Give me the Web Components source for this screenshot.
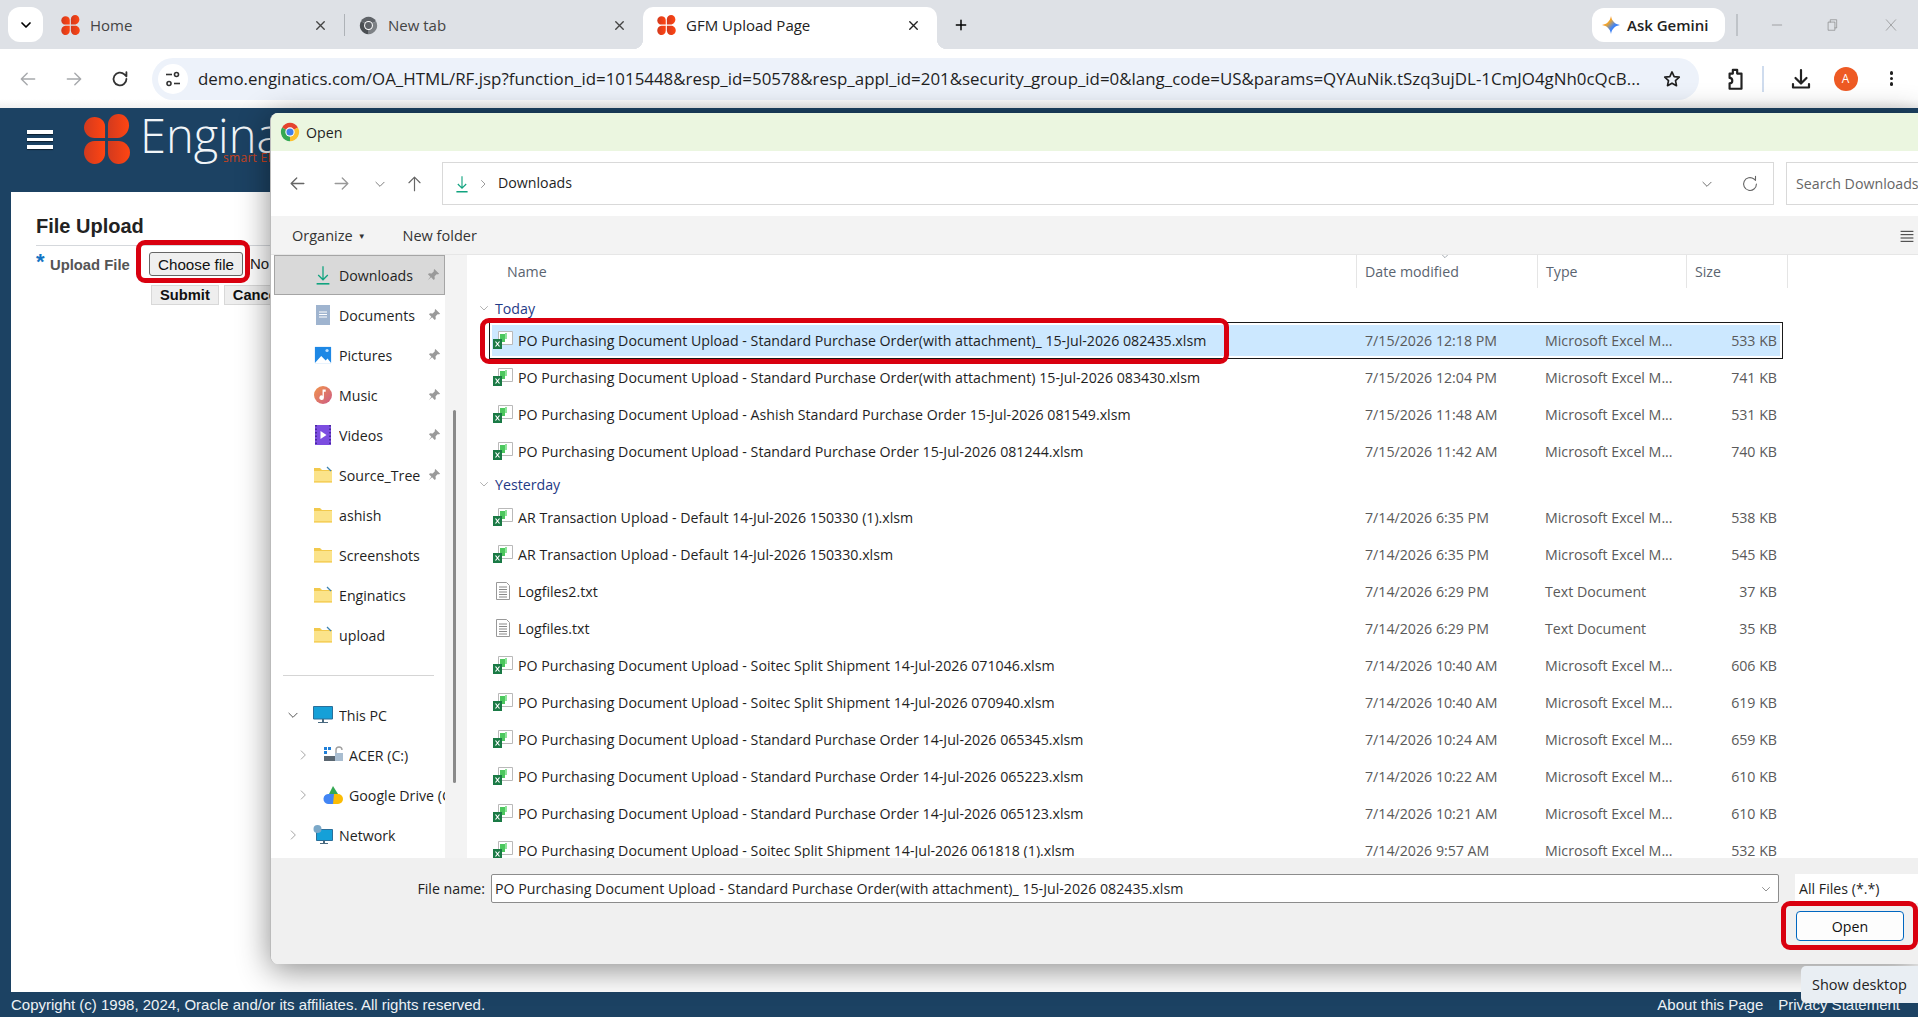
<!DOCTYPE html>
<html><head><meta charset="utf-8"><title>GFM Upload Page</title>
<style>
html,body{margin:0;padding:0;height:100%;overflow:hidden;background:#1c4263}
body{font-family:"Open Sans","Noto Sans",sans-serif}
</style></head>
<body>
<app-shell>
  <browser-tabs></browser-tabs>
  <browser-toolbar></browser-toolbar>
  <erp-page></erp-page>
  <file-dialog></file-dialog>
  <red-mark style="left:136px;top:240px;width:114px;height:43px"></red-mark>
  <red-mark style="left:480px;top:318px;width:749px;height:46px"></red-mark>
  <red-mark style="left:1781px;top:901px;width:137px;height:49px"></red-mark>
  <desk-tip>Show desktop</desk-tip>
</app-shell>
<script>
const petals=(id)=>`<svg viewBox="0 0 48 52" width="100%" height="100%"><defs><linearGradient id="${id}" x1="0" x2="1" y1="0" y2="0"><stop offset="0" stop-color="#d23a1e"/><stop offset="1" stop-color="#ff4512"/></linearGradient></defs><g fill="url(#${id})"><path d="M22 25H11C5 25 0 20 0 14S5 3 11 3c6 0 11 4 11 10z"/><path d="M25 25V11C25 5 30 0 36 0s11 5 11 12-6 13-12 13z"/><path d="M22 28v13c0 6-5 11-11 11S0 46 0 40s4-12 11-12z"/><path d="M25 28h11c6 0 12 5 12 12s-6 12-12 12-11-5-11-12z"/></g></svg>`;
const chromeIcon=(a,b,c,d,e)=>`<svg viewBox="0 0 24 24" width="100%" height="100%"><path fill="${a}" d="M12 12L2.5 6.5A11 11 0 0 1 21.5 6.5z"/><path fill="${b}" d="M12 12L21.5 6.5A11 11 0 0 1 12 23z"/><path fill="${c}" d="M12 12L12 23A11 11 0 0 1 2.5 6.5z"/><circle cx="12" cy="12" r="5.6" fill="${e}"/><circle cx="12" cy="12" r="4.3" fill="${d}"/></svg>`;
const st=(d,w=1.5,c='currentColor')=>`<svg viewBox="0 0 24 24" width="100%" height="100%" fill="none" stroke="${c}" stroke-width="${w}" stroke-linecap="round" stroke-linejoin="round"><path d="${d}"/></svg>`;
const folder=(arrow)=>`<svg viewBox="0 0 20 18" width="100%" height="100%"><path fill="#f2c94c" d="M1 2h6l2 2h10v1H1z"/><path fill="#fbe38a" d="M1 5h18v11.5H1z"/><path fill="#f5cf5b" d="M1 15h18v1.5H1z"/>${arrow?'<path d="M14 1l4 4" stroke="#3b82b0" stroke-width="1.2"/>':''}</svg>`;
const ICONS={
 petal:()=>petals('p'+Math.random().toString(36).slice(2)),
 chrome:()=>chromeIcon('#e5432f','#fbc02d','#34a853','#3f7fe8','#fff'),
 chromegrey:()=>chromeIcon('#5f6368','#7d8185','#4b4f53','#5f6368','#fff'),
 close:()=>st('M6 6l12 12M18 6L6 18',2.2),
 closethin:()=>st('M4 3l16 18M20 3L4 21',1),
 plus:()=>st('M12 5v14M5 12h14',2.2),
 chevdown:()=>st('M6 9l6 6 6-6',2.6),
 thinchev:()=>st('M5 9l7 7 7-7',1.3),
 thinright:()=>st('M9 5l7 7-7 7',1.3),
 back:()=>st('M20 12H5M11 5l-7 7 7 7',1.7),
 fwd:()=>st('M4 12h15M13 5l7 7-7 7',1.7),
 up:()=>st('M12 21V4M5 11l7-7 7 7',1.5),
 reload:()=>st('M19 12a7 7 0 1 1-2.2-5.1L19 9V4.5',2),
 thinreload:()=>st('M19 12a7 7 0 1 1-2.6-5.4L18 8V3.5',1.2),
 star:()=>`<svg viewBox="0 0 24 24" width="100%" height="100%" fill="none" stroke="#1f1f1f" stroke-width="2" stroke-linejoin="round"><path d="M12 3.5l2.6 5.6 6.1.7-4.5 4.2 1.2 6L12 17l-5.4 3 1.2-6-4.5-4.2 6.1-.7z"/></svg>`,
 ext:()=>st('M7 7h3V3.5h4V7h4v14H7v-5a2.500 2.500 0 0 0 0-5z',2),
 dl:()=>st('M12 3v13M6.5 11l5.5 5.5 5.5-5.5M4 17v3.500h16V17',2.2),
 dlg:()=>`<svg viewBox="0 0 20 24" width="100%" height="100%" fill="none" stroke="#10a37f" stroke-width="1.6"><path d="M10 1v17M4 12l6 6 6-6"/><path d="M2 23h16" stroke-width="2"/></svg>`,
 gemini:()=>`<svg viewBox="0 0 20 20" width="100%" height="100%"><defs><linearGradient id="gm" x1="0" y1="0" x2="1" y2="1"><stop offset="0" stop-color="#e8453c"/><stop offset=".35" stop-color="#f5a623"/><stop offset=".6" stop-color="#4285f4"/><stop offset="1" stop-color="#2a6ff0"/></linearGradient></defs><path fill="url(#gm)" d="M10 0C10.8 5.5 14.5 9.2 20 10 14.5 10.8 10.8 14.5 10 20 9.2 14.5 5.5 10.8 0 10 5.5 9.2 9.2 5.5 10 0z"/></svg>`,
 minimize:()=>st('M4 12h16',1,'#777'),
 restore:()=>st('M6 7h11v14H6zM9 7V3h11v14h-3',1,'#777'),
 xls:()=>`<svg viewBox="0 0 20 18" width="100%" height="100%"><path fill="#fff" stroke="#b9b9b9" d="M5.5.5h14v13h-14z"/><path fill="#4cc75e" d="M7 3h5v8H7z"/><path fill="#8fe39a" d="M12 2h2v6h-2z"/><path fill="#1a7a45" d="M0 8h9v10H0z"/><path d="M2.5 10.5l4 5M6.5 10.5l-4 5" stroke="#fff" stroke-width="1.2"/></svg>`,
 txt:()=>`<svg viewBox="0 0 16 18" width="100%" height="100%"><path fill="#fff" stroke="#999" d="M1.5.5h10l3 3v14h-13z"/><path stroke="#888" d="M4 5h8M4 7.5h8M4 10h8M4 12.5h8M4 15h8"/></svg>`,
 doc:()=>`<svg viewBox="0 0 16 20" width="100%" height="100%"><path fill="#9fb4cf" d="M1 0h14v20H1z"/><path stroke="#fff" d="M4 7h8M4 9.5h8M4 12h8"/></svg>`,
 pics:()=>`<svg viewBox="0 0 20 20" width="100%" height="100%"><path fill="#1e88e5" d="M1 1h18v18H1z"/><path fill="#fff" d="M1 19l7-8 5 5 2-2 4 5z"/><circle cx="14.500" cy="5" r="1.800" fill="#bde0ff"/></svg>`,
 music:()=>`<svg viewBox="0 0 20 20" width="100%" height="100%"><defs><linearGradient id="mu" x1="0" y1="0" x2="1" y2="1"><stop offset="0" stop-color="#f2954a"/><stop offset="1" stop-color="#cc5a86"/></linearGradient></defs><circle cx="10" cy="10" r="10" fill="url(#mu)"/><path fill="#fff" d="M9.500 4H13v2.500h-2V13a2.500 2.500 0 1 1-1.500-2.300z"/></svg>`,
 videos:()=>`<svg viewBox="0 0 18 20" width="100%" height="100%"><path fill="#7c4de0" d="M1 0h16v20H1z"/><path fill="#fff" d="M6.500 6l6 4-6 4z"/><path stroke="#4a2aa0" stroke-dasharray="1.500 2" stroke-width="2" d="M2 0v20M16 0v20"/></svg>`,
 folder:()=>folder(false), folderq:()=>folder(true),
 pin:()=>`<svg viewBox="0 0 16 16" width="100%" height="100%" fill="#9a9a9a"><path d="M9.500 1l5.500 5.500-1.500.8-1-.5L9.800 9.500l.2 3-1.200 1.200-3-3.200L2 14l3-4-2.800-3L3.500 6l3 .2 2.700-2.700-.5-1z"/></svg>`,
 pc:()=>`<svg viewBox="0 0 20 18" width="100%" height="100%"><path fill="#15a0d8" stroke="#2a6f9a" d="M.5.5h19v12.500H.5z"/><path fill="#4a6a80" d="M9 13h2v3H9zM5 16h10v1H5z"/></svg>`,
 drive:()=>`<svg viewBox="0 0 20 18" width="100%" height="100%"><path fill="#1f7fd8" d="M1 1h3v3H1zM5 1h3v3H5zM1 5h3v3H1z"/><path fill="#5a6670" d="M1 10h12v5H1z"/><path fill="#a9bdd0" d="M12 7h8v8h-8z"/><path fill="none" stroke="#a0a0a0" stroke-width="1.400" d="M13 7V4a3 3 0 0 1 6 0"/></svg>`,
 gdrive:()=>`<svg viewBox="0 0 20 18" width="100%" height="100%"><path fill="#34a853" d="M10 0l5 8-4 3-5-3z"/><path fill="#fbbc04" d="M15 8h-5l-1 10h6a5 5 0 0 0 0-10z"/><path fill="#4285f4" d="M6 8h5l-1 10H5A5 5 0 0 1 6 8z"/></svg>`,
 net:()=>`<svg viewBox="0 0 20 20" width="100%" height="100%"><path fill="#15a0d8" stroke="#2a6f9a" d="M3.500 4.500h16v11h-16z"/><path fill="#4a6a80" d="M10 15.500h2V18h-2zM7 18h8v1H7z"/><circle cx="4.500" cy="4" r="4" fill="#7ba8c8"/></svg>`,
 listview:()=>st('M3 5h18M3 10h18M3 15h18M3 20h18',1.4,'#222'),
};
function def(name,css,html,extra={}){
  const t=document.createElement('template');
  t.innerHTML=`<style>${css}</style>${html}`;
  customElements.define(name,class extends HTMLElement{
    constructor(){super();this.attachShadow({mode:'open'}).appendChild(t.content.cloneNode(true));}
    connectedCallback(){extra.init&&extra.init.call(this,this.shadowRoot);}
  });
}
def('ui-icon',`:host{display:inline-block;flex:none;line-height:0}`,`<span id="i" style="display:block;width:100%;height:100%"></span>`,{init(r){
  const s=this.getAttribute('s');const [w,h]=(s||'16').split('x');this.style.width=w+'px';this.style.height=(h||w)+'px';
  r.getElementById('i').innerHTML=ICONS[this.getAttribute('n')]();
}});
def('app-shell',`:host{display:flex;flex-direction:column;position:relative;width:1918px;height:1017px;overflow:hidden}`,`<slot></slot>`);
def('red-mark',`:host{position:absolute;box-sizing:border-box;border:5px solid #d9000f;border-radius:9px;display:block;pointer-events:none}`,``);
def('desk-tip',`:host{position:absolute;left:1801px;top:966px;width:117px;height:37px;box-sizing:border-box;padding-left:11px;display:flex;align-items:center;background:#e9eef3;border-radius:5px 0 0 5px;font:14.500px "Open Sans",sans-serif;color:#222;white-space:nowrap}`,`<slot></slot>`);

def('browser-tab',`:host{position:relative;box-sizing:border-box;height:42px;display:flex;align-items:center;padding:0 14px 6px 14px;color:#444;font:15px "Open Sans",sans-serif}
:host([active]){background:#fff;border-radius:10px 10px 0 0;color:#222}
:host([active])::before,:host([active])::after{content:"";position:absolute;bottom:0;width:10px;height:10px}
:host([active])::before{left:-10px;background:radial-gradient(circle at 0 0,transparent 10px,#fff 10.5px)}
:host([active])::after{right:-10px;background:radial-gradient(circle at 100% 0,transparent 10px,#fff 10.5px)}
.t{flex:1;margin-left:10px;white-space:nowrap}`,`<slot name="icon"></slot><span class="t"><slot></slot></span><ui-icon n="close" s="15" style="margin-right:2px"></ui-icon>`);
def('browser-tabs',`:host{display:flex;align-items:flex-end;height:49px;background:#dee1e6;flex:none;position:relative;padding-left:8px;box-sizing:border-box}
.dd{width:35px;height:35px;margin:0 4px 7px 0;border-radius:12px;background:#fff;display:flex;align-items:center;justify-content:center}
.sep{width:1px;height:22px;background:#aeb2b7;margin-bottom:13px}
.plus{margin:0 0 16px 16px}
.gem{margin:0 0 7px auto;width:133px;height:34px;border-radius:12px;background:#fff;display:flex;align-items:center;box-sizing:border-box;padding-left:10px;gap:7px;font:600 15px "Open Sans",sans-serif;color:#222;white-space:nowrap}
.s2{width:2px;height:22px;background:#bfc3c8;margin:0 0 13px 11px}
.win{display:flex;margin:0 20px 17px 32px}
`,`<span class="dd"><ui-icon n="chevdown" s="16"></ui-icon></span>
<browser-tab style="width:297px"><ui-icon slot="icon" n="petal" s="19x20"></ui-icon>Home</browser-tab><span class="sep"></span>
<browser-tab style="width:298px"><ui-icon slot="icon" n="chromegrey" s="19"></ui-icon>New tab</browser-tab>
<browser-tab active style="width:294px"><ui-icon slot="icon" n="petal" s="19x20"></ui-icon>GFM Upload Page</browser-tab>
<ui-icon class="plus" n="plus" s="16"></ui-icon>
<span class="gem"><ui-icon n="gemini" s="18"></ui-icon>Ask Gemini</span><span class="s2"></span>
<span class="win"><ui-icon n="minimize" s="14"></ui-icon><ui-icon n="restore" s="14" style="margin-left:41px"></ui-icon><ui-icon n="closethin" s="14" style="color:#777;margin-left:45px"></ui-icon></span>`);
def('browser-toolbar',`:host{display:flex;align-items:center;height:59px;background:linear-gradient(#fff 85%,#f0f0f0);flex:none;box-sizing:border-box;padding:0 0 0 5px;color:#333}
.b{width:46px;display:flex;justify-content:center}
.om{margin-left:9px;width:1547px;height:42px;box-sizing:border-box;background:#edf2fa;border-radius:21px;display:flex;align-items:center;padding:0 17px 0 6px;flex:none}
.tune{width:30px;height:30px;border-radius:50%;background:#fff;display:flex;align-items:center;justify-content:center;position:relative;flex:none}
.url{flex:1;margin-left:10px;font:16.900px "Open Sans",sans-serif;color:#1f1f1f;white-space:nowrap;overflow:hidden}
.sep{width:1.500px;height:26px;background:#cfdcee;margin-left:14px;flex:none}
.dots{display:flex;flex-direction:column;gap:2.200px;margin-left:32px;flex:none}
.dots i{display:block;width:3.600px;height:3.600px;border-radius:50%;background:#1f1f1f}
svg{display:block}`,`<span class="b" style="color:#a7a9ac"><ui-icon n="back" s="20"></ui-icon></span><span class="b" style="color:#a7a9ac"><ui-icon n="fwd" s="20"></ui-icon></span><span class="b" style="color:#333"><ui-icon n="reload" s="22"></ui-icon></span>
<span class="om"><span class="tune"><svg width="18" height="18" viewBox="0 0 18 18" fill="none" stroke="#333" stroke-width="1.600"><path d="M2 4.500h6"/><circle cx="12.500" cy="4.500" r="2"/><path d="M16 13.500h-6"/><circle cx="5" cy="13.500" r="2"/></svg></span>
<span class="url">demo.enginatics.com/OA_HTML/RF.jsp?function_id=1015448&amp;resp_id=50578&amp;resp_appl_id=201&amp;security_group_id=0&amp;lang_code=US&amp;params=QYAuNik.tSzq3ujDL-1CmJO4gNh0cQcB...</span><ui-icon n="star" s="20" style="margin-left:8px"></ui-icon></span>
<ui-icon n="ext" s="26" style="margin-left:23px;color:#222"></ui-icon><span class="sep"></span><ui-icon n="dl" s="24" style="margin-left:25px;color:#222"></ui-icon>
<span style="margin-left:21px;width:24px;height:24px;border-radius:50%;background:#ee5a24;color:#fff;font:12px 'Open Sans',sans-serif;display:flex;align-items:center;justify-content:center;flex:none">A</span>
<span class="dots"><i></i><i></i><i></i></span>`);
def('erp-page',`:host{flex:1;display:flex;flex-direction:column;background:#1c4263;min-height:0;font-family:"Liberation Sans",sans-serif}
.hd{height:84px;display:flex;flex:none;align-items:flex-start;padding-left:27px;box-sizing:border-box}
.bur{width:26px;margin-top:22px;display:flex;flex-direction:column;gap:4px}
.bur i{display:block;height:3.500px;background:#fff;box-shadow:0 1px 1px #0008}
.lg{margin:5px 0 0 31px}
.nm{margin:0 0 0 10px;color:#f1f5f8;font:300 47px/50px "Open Sans",sans-serif;position:relative;top:2px;white-space:nowrap}
.sub{position:absolute;left:83px;top:41px;font:400 12px/14px "Open Sans",sans-serif;color:#c8421d;letter-spacing:.3px}
main{flex:1;background:#fff;margin-left:11px;padding:22px 0 0 25px;box-sizing:border-box;min-height:0}
h1{margin:0;font:700 20px/24px "Liberation Sans",sans-serif;color:#222;padding-bottom:7px;border-bottom:1px solid #d5d8dc}
.r{display:flex;margin-top:6px;align-items:flex-start}
.star{color:#1273c4;font:700 22px/20px "Liberation Sans",sans-serif;width:14px}
label{font:700 14.800px/24px "Liberation Sans",sans-serif;color:#555;width:99px;margin-top:1px;white-space:nowrap}
.cf{box-sizing:border-box;width:94px;height:24px;border:1px solid #666;border-radius:3px;background:#efefef;color:#111;font:15.200px "Liberation Sans",sans-serif;display:flex;align-items:center;justify-content:center}
.no{font:15px/24px "Liberation Sans",sans-serif;margin-left:7px;color:#222;white-space:nowrap}
.btns{display:flex;gap:5px;margin:8px 0 0 115px}
.btn{box-sizing:border-box;height:20px;padding:0 8px;background:#eee;border:1px solid #d8d8d8;font:700 14.700px/18px "Liberation Sans",sans-serif;color:#111}
footer{height:25px;flex:none;display:flex;align-items:center;padding:0 18px 0 11px;color:#eef2f6;font:15px "Liberation Sans",sans-serif;gap:15px;box-sizing:border-box}
.sp{flex:1}
`,`<div class="hd"><div class="bur"><i></i><i></i><i></i></div><ui-icon class="lg" n="petal" s="46x52"></ui-icon><div class="nm">Enginatics<span class="sub">smart ERP</span></div></div>
<main><h1>File Upload</h1><div class="r"><span class="star">*</span><label>Upload File</label><span class="cf">Choose file</span><span class="no">No file chosen</span></div>
<div class="btns"><span class="btn">Submit</span><span class="btn">Cancel</span></div></main>
<footer><span>Copyright (c) 1998, 2024, Oracle and/or its affiliates. All rights reserved.</span><span class="sp"></span><span>About this Page</span><span>Privacy Statement</span></footer>`);

def('nav-item',`:host{display:flex;align-items:center;height:40px;box-sizing:border-box;margin-left:3px;width:171px;font:14.200px "Open Sans",sans-serif;color:#1f1f1f;white-space:nowrap;overflow:hidden;position:relative;flex:none}
:host([sel]){background:#d9d9d9;border:1px solid #a5a5a5}
.c{width:39px;flex:none;display:flex;justify-content:flex-start;box-sizing:border-box}
:host([lvl="2"]) .c{width:49px;}
:host([sel]) .c{width:38px}
.l{margin-left:6px;flex:1;overflow:hidden}
.p{margin-right:4px}`,`<span class="c" id="c"></span><slot name="icon"></slot><span class="l"><slot></slot></span><ui-icon id="p" class="p" n="pin" s="14" style="display:none"></ui-icon>`,{init(r){
  if(this.hasAttribute('pin'))r.getElementById('p').style.display='';
  const ch=this.getAttribute('chev');
  if(ch){const lvl=this.getAttribute('lvl')==='2';r.getElementById('c').innerHTML=`<ui-icon n="${ch==='d'?'thinchev':'thinright'}" s="14" style="margin-left:${lvl?22:12}px;color:${ch==='d'?'#222':'#888'}"></ui-icon>`;}
}});
def('file-row',`:host{display:grid;grid-template-columns:873px 180px 140px 95px;align-items:center;height:37px;box-sizing:border-box;margin-left:22px;width:1294px;border:3px solid transparent;font:14.200px "Open Sans",sans-serif;color:#1f1f1f;white-space:nowrap;position:relative;flex:none}
:host([sel]){background:#cce8ff;outline:1px solid #1a1a1a;outline-offset:-1px;background-clip:padding-box}
:host([sel]){border-color:#fff}
.n{display:flex;align-items:center;gap:5px;padding-left:1px}
.ic{width:20px;display:flex;justify-content:center;flex:none}
.m{color:#5a5a5a}
.sz{text-align:right;padding-right:3px}`,`<span class="n"><span class="ic" id="ic"></span><slot></slot></span><span class="m" id="d"></span><span class="m" id="t"></span><span class="m sz" id="s"></span>`,{init(r){
  const ic=document.createElement('ui-icon');const k=this.getAttribute('kind');ic.setAttribute('n',k);ic.setAttribute('s',k==='txt'?'16x18':'20x18');
  r.getElementById('ic').appendChild(ic);
  r.getElementById('d').textContent=this.getAttribute('d');r.getElementById('t').textContent=this.getAttribute('t');r.getElementById('s').textContent=this.getAttribute('z');
}});
def('file-group',`:host{display:flex;align-items:center;height:29px;flex:none;font:14.200px "Open Sans",sans-serif;color:#1f3a86;padding-left:11px;gap:5px;box-sizing:border-box}`,`<ui-icon n="thinchev" s="12" style="color:#888"></ui-icon><slot></slot>`);

const NAV=[['dlg','Downloads','pin sel','16x22'],['doc','Documents','pin','18x20'],['pics','Pictures','pin'],['music','Music','pin'],['videos','Videos','pin','18x20'],['folderq','Source_Tree','pin'],['folder','ashish',''],['folder','Screenshots',''],['folderq','Enginatics',''],['folderq','upload','']];
const X='Microsoft Excel M...';
const P='PO Purchasing Document Upload - ';
const ROWS1=[[P+'Standard Purchase Order(with attachment)_ 15-Jul-2026 082435.xlsm','7/15/2026 12:18 PM','533 KB',1],[P+'Standard Purchase Order(with attachment) 15-Jul-2026 083430.xlsm','7/15/2026 12:04 PM','741 KB'],[P+'Ashish Standard Purchase Order 15-Jul-2026 081549.xlsm','7/15/2026 11:48 AM','531 KB'],[P+'Standard Purchase Order 15-Jul-2026 081244.xlsm','7/15/2026 11:42 AM','740 KB']];
const ROWS2=[['AR Transaction Upload - Default 14-Jul-2026 150330 (1).xlsm','7/14/2026 6:35 PM','538 KB'],['AR Transaction Upload - Default 14-Jul-2026 150330.xlsm','7/14/2026 6:35 PM','545 KB'],['Logfiles2.txt','7/14/2026 6:29 PM','37 KB',0,'txt'],['Logfiles.txt','7/14/2026 6:29 PM','35 KB',0,'txt'],[P+'Soitec Split Shipment 14-Jul-2026 071046.xlsm','7/14/2026 10:40 AM','606 KB'],[P+'Soitec Split Shipment 14-Jul-2026 070940.xlsm','7/14/2026 10:40 AM','619 KB'],[P+'Standard Purchase Order 14-Jul-2026 065345.xlsm','7/14/2026 10:24 AM','659 KB'],[P+'Standard Purchase Order 14-Jul-2026 065223.xlsm','7/14/2026 10:22 AM','610 KB'],[P+'Standard Purchase Order 14-Jul-2026 065123.xlsm','7/14/2026 10:21 AM','610 KB'],[P+'Soitec Split Shipment 14-Jul-2026 061818 (1).xlsm','7/14/2026 9:57 AM','532 KB']];
const esc=s=>s.replace(/&/g,'&amp;');
const rowH=(r)=>`<file-row ${r[3]?'sel':''} kind="${r[4]||'xls'}" d="${r[1]}" t="${r[4]?'Text Document':X}" z="${r[2]}">${esc(r[0])}</file-row>`;
def('file-dialog',`:host{position:absolute;left:270px;top:113px;right:0;height:851px;display:flex;flex-direction:column;background:#fff;border-radius:8px 0 0 8px;box-shadow:0 6px 32px rgba(0,0,0,.45);overflow:hidden;font:14.200px "Open Sans",sans-serif;color:#1f1f1f;box-sizing:border-box;border-left:1px solid #bbb}
.tb{height:38px;flex:none;background:#ebf6e0;display:flex;align-items:center;padding-left:9px;gap:6px}
.ad{height:65px;flex:none;display:flex;align-items:center;color:#666}
.ad .nv{display:flex;align-items:center;width:171px;flex:none;padding-left:17px;box-sizing:border-box}
.box{height:43px;box-sizing:border-box;border:1px solid #d9d9d9;display:flex;align-items:center;background:#fff}
.path{width:1332px;padding:0 12px 0 12px;flex:none}
.path .lbl{margin:-2px 0 0 9px;color:#1f1f1f}
.srch{margin-left:12px;flex:1;padding-left:9px;color:#666;white-space:nowrap}
.cmd{height:39px;flex:none;background:#f3f3f3;display:flex;align-items:center;padding-left:21px;color:#333;border-bottom:1px solid #e6e6e6;box-sizing:border-box;position:relative;font-size:14.500px}
.body{flex:1;display:flex;min-height:0}
nav{width:174px;flex:none;display:flex;flex-direction:column;overflow:hidden}
.spc{height:40px;flex:none;display:flex;align-items:center;padding-left:12px}
.spc i{display:block;width:151px;height:1px;background:#d5d5d5}
.gut{width:22px;flex:none;background:#f3f3f3;position:relative}
.thumb{position:absolute;left:8px;top:155px;width:3px;height:373px;background:#8a8a8a;border-radius:2px}
.list{flex:1;min-width:0;overflow:hidden;display:flex;flex-direction:column}
.hdr{height:33px;flex:none;display:grid;grid-template-columns:890px 181px 149px 101px;color:#5a6470;position:relative;margin-bottom:0}
.hdr span{border-right:1px solid #e5e5e5;display:flex;align-items:center;padding-left:8px;box-sizing:border-box;position:relative}
.hdr span:first-child{padding-left:40px}
.car{position:absolute;left:83px;top:-4px}
.bot{height:106px;flex:none;background:#f0f0f0;position:relative;box-sizing:border-box;padding:16px 0 0 0}
.fn{display:flex;align-items:center;height:29px}
.fn label{width:214px;text-align:right;flex:none;color:#222;white-space:nowrap}
.inp{margin-left:6px;width:1288px;height:29px;box-sizing:border-box;background:#fff;border:1px solid #8c8c8c;border-radius:2px;display:flex;align-items:center;padding:0 3px;white-space:nowrap;overflow:hidden;flex:none}
.inp span{flex:1}
.flt{margin-left:16px;flex:1;height:29px;background:#fff;display:flex;align-items:center;padding-left:4px;white-space:nowrap}
.act{display:flex;justify-content:flex-end;margin-top:8px;padding-right:14px}
.open{width:108px;height:30px;box-sizing:border-box;border:1.500px solid #0067c0;border-radius:4px;background:#fdfdfd;display:flex;align-items:center;justify-content:center;color:#111}
`,`<div class="tb"><ui-icon n="chrome" s="20"></ui-icon><span>Open</span></div>
<div class="ad"><div class="nv"><ui-icon n="back" s="19"></ui-icon><ui-icon n="fwd" s="19" style="margin-left:25px;color:#999"></ui-icon><ui-icon n="thinchev" s="14" style="margin-left:22px;color:#555"></ui-icon><ui-icon n="up" s="19" style="margin-left:18px"></ui-icon></div>
<div class="box path"><ui-icon n="dlg" s="14x20"></ui-icon><ui-icon n="thinright" s="12" style="margin-left:8px"></ui-icon><span class="lbl">Downloads</span><span style="flex:1"></span><ui-icon n="thinchev" s="14" style="color:#444"></ui-icon><ui-icon n="thinreload" s="22" style="margin-left:25px"></ui-icon></div><div class="box srch">Search Downloads</div></div>
<div class="cmd"><span>Organize</span><span style="font-size:8px;margin-left:5px">▼</span><span style="margin-left:37px">New folder</span><ui-icon n="listview" s="16" style="position:absolute;left:1628px;top:12px"></ui-icon></div>
<div class="body"><nav id="nav"></nav><div class="gut"><div class="thumb"></div></div>
<div class="list" id="list"><div class="hdr"><span>Name</span><span>Date modified<ui-icon class="car" n="thinchev" s="10"></ui-icon></span><span>Type</span><span>Size</span></div></div></div>
<div class="bot"><div class="fn"><label>File name:</label><div class="inp"><span>PO Purchasing Document Upload - Standard Purchase Order(with attachment)_ 15-Jul-2026 082435.xlsm</span><ui-icon n="thinchev" s="12" style="color:#555;margin-right:3px"></ui-icon></div><div class="flt">All Files (*.*)</div></div>
<div class="act"><span class="open">Open</span></div></div>`,{init(r){
  r.getElementById('nav').innerHTML=NAV.map(([i,t,a,s])=>`<nav-item ${a}><ui-icon slot="icon" n="${i}" s="${s||'20x18'}" style="${s&&i!=='dlg'?'margin-left:1px;margin-right:1px':i==='dlg'?'margin:0 2px':''}"></ui-icon>${t}</nav-item>`).join('')+
  `<div class="spc"><i></i></div><nav-item chev="d"><ui-icon slot="icon" n="pc" s="20x18"></ui-icon>This PC</nav-item><nav-item chev="r" lvl="2"><ui-icon slot="icon" n="drive" s="20x18"></ui-icon>ACER (C:)</nav-item><nav-item chev="r" lvl="2"><ui-icon slot="icon" n="gdrive" s="20x18"></ui-icon>Google Drive (G:)</nav-item><nav-item chev="r"><ui-icon slot="icon" n="net" s="20x20"></ui-icon>Network</nav-item>`;
  r.getElementById('list').insertAdjacentHTML('beforeend',`<file-group style="margin-top:4px;height:29.500px;padding-top:3px">Today</file-group>`+ROWS1.map(rowH).join('')+`<file-group>Yesterday</file-group>`+ROWS2.map(rowH).join(''));
}});
</script>
</body></html>
